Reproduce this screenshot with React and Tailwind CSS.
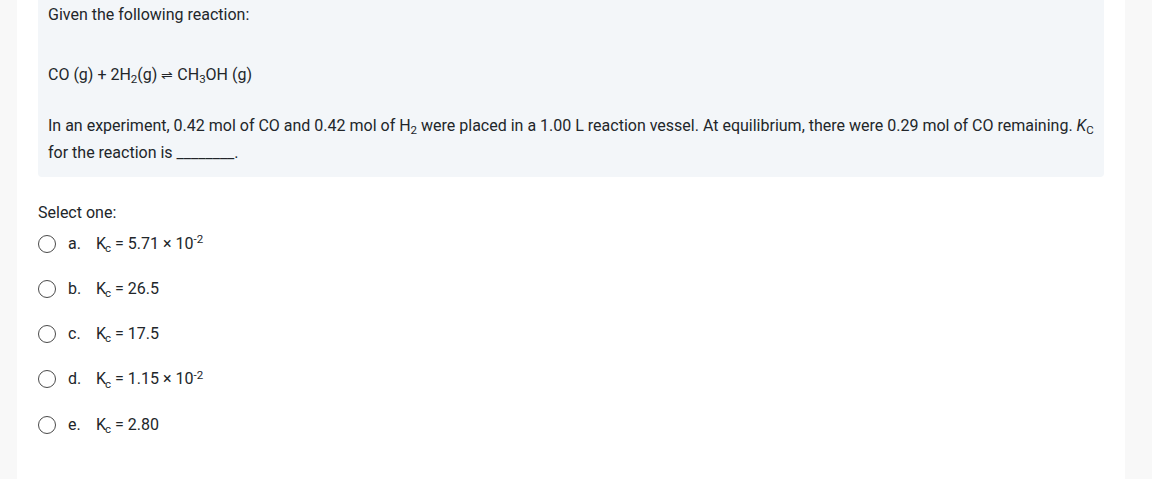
import React from 'react';

const options = [
  { key: 'a', value: '5.71', exp: '-2' },
  { key: 'b', value: '26.5' },
  { key: 'c', value: '17.5' },
  { key: 'd', value: '1.15', exp: '-2' },
  { key: 'e', value: '2.80' },
];

const Sub = ({ children }) => (
  <span className="relative top-[0.3em] text-[0.72em] leading-none">{children}</span>
);

const Kc = () => (
  <span>
    K<span className="relative top-[0.3em] -ml-[1px] text-[0.72em] leading-none">c</span>
  </span>
);

const Option = ({ option }) => (
  <div className="flex items-center h-[22.5px]">
    <span className="w-[18px] h-[18px] rounded-full border-[1.25px] border-[#4a4a4a] bg-white shrink-0" />
    <span className="ml-[12px] w-[28px]">{option.key}.</span>
    <span>
      <Kc /> = {option.value}
      {option.exp && (
        <>
          {' '}× 10<span className="relative -top-[0.45em] text-[0.72em] leading-none">{option.exp}</span>
        </>
      )}
    </span>
  </div>
);

export default function App() {
  return (
    <div
      className="min-h-screen bg-[#f8f8f8] text-[16px] text-[#22262a]"
      style={{ fontFamily: 'Roboto, "Liberation Sans", sans-serif' }}
    >
      <div className="ml-[17px] w-[1108px] min-h-[479px] bg-white px-[21px]">
        {/* Question text */}
        <div className="bg-[#f3f6f9] rounded-b-[4px] px-[10px] pt-[4px] pb-[10.5px]">
          <p className="leading-[22.5px]">Given the following reaction:</p>
          <p className="leading-[22.5px] mt-[37.5px]">
            CO (g) + 2H<Sub>2</Sub>(g) <span className="text-[14px]">⇌</span> CH<Sub>3</Sub>OH (g)
          </p>
          <p className="leading-[27px] mt-[25.5px]">
            In an experiment, 0.42 mol of CO and 0.42 mol of H<Sub>2</Sub> were placed in a 1.00 L
            reaction vessel. At equilibrium, there were 0.29 mol of CO remaining.{' '}
            <span className="italic">K</span>
            <Sub>C</Sub> for the reaction is ________.
          </p>
        </div>

        {/* Answers */}
        <div className="mt-[25.75px] leading-[22.5px]">Select one:</div>
        <div className="mt-[7.5px] flex flex-col gap-[22.75px]">
          {options.map(option => (
            <Option key={option.key} option={option} />
          ))}
        </div>
      </div>
    </div>
  );
}
